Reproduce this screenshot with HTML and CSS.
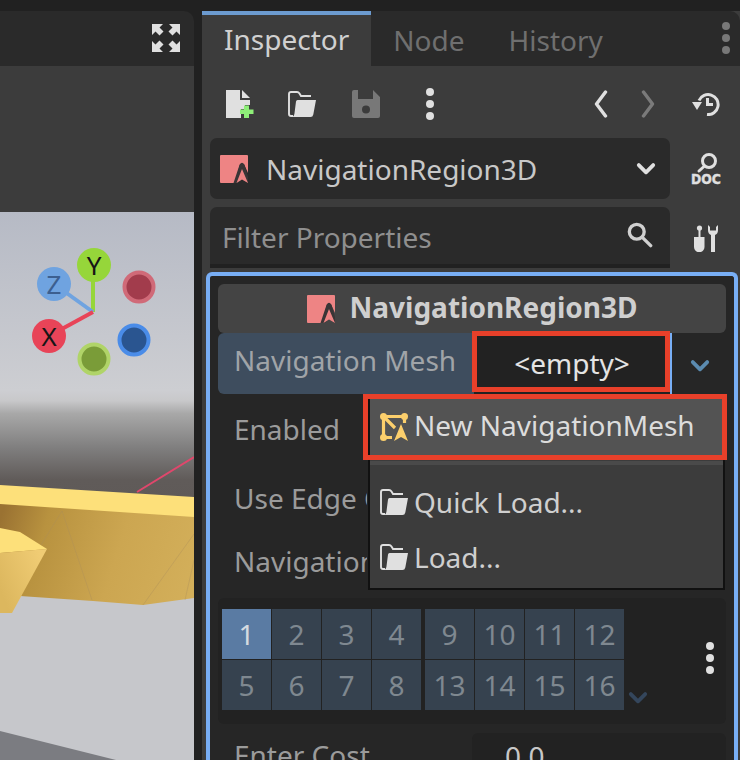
FILE: index.html
```html
<!DOCTYPE html>
<html lang="en">
<head>
<meta charset="utf-8">
<title>NavigationRegion3D Inspector</title>
<link rel="stylesheet" href="styles.css">
</head>
<body>
<svg class="defs" width="0" height="0" aria-hidden="true">
  <defs>
    <symbol id="i-node" viewBox="0 0 28 28">
      <path d="M1 0H27Q28 0 28 1V18L24 9H20L15 28H1Q0 28 0 27V1Q0 0 1 0Z" fill="#ee8484"/>
      <path d="M13.500 28 19.500 10Q22 5.500 24.500 10L28 22V28L22 24.500 17.500 28Z" fill="#3a3536"/>
      <path d="M16.500 28 22 14 28 28 22 24.500Z" fill="#ee8484"/>
    </symbol>
    <symbol id="i-folder" viewBox="0 0 28 26">
      <path d="M5 25H3Q1 25 1 23V3Q1 1 3 1H9Q10.500 1 11.500 2.500L13 5H23" fill="none" stroke="currentColor" stroke-width="1.900"/>
      <path d="M9.500 9H28L25.300 23.500Q24.800 26 22.500 26H4.500Q6 25 6.400 23L8 10.500Q8.200 9 9.500 9Z" fill="currentColor"/>
    </symbol>
    <symbol id="i-navmesh" viewBox="0 0 28 28">
      <path d="M3.500 3.500H24.500V10M3.500 3.500V24.500H12M3.500 3.500 15 15" fill="none" stroke="#fccf6c" stroke-width="3.200"/>
      <circle cx="3.500" cy="3.500" r="3.500" fill="#fccf6c"/><circle cx="24.500" cy="3.500" r="3.500" fill="#fccf6c"/><circle cx="3.500" cy="24.500" r="3.500" fill="#fccf6c"/>
      <path d="M14 28 21 11 28 28 21 24Z" fill="#fccf6c"/>
    </symbol>
    <symbol id="i-kebab" viewBox="0 0 10 32">
      <circle cx="5" cy="4" r="4" fill="currentColor"/><circle cx="5" cy="16" r="4" fill="currentColor"/><circle cx="5" cy="28" r="4" fill="currentColor"/>
    </symbol>
    <symbol id="i-chev" viewBox="0 0 18 12">
      <path d="M2.500 2.500 9 9 15.500 2.500" fill="none" stroke="currentColor" stroke-width="3.400" stroke-linecap="round" stroke-linejoin="round"/>
    </symbol>
  </defs>
</svg>

<main class="app">
  <section class="viewport-col">
    <header class="view-tabs">
      <svg class="fullscreen" viewBox="0 0 28 28" aria-hidden="true">
        <path d="M0 0H11L7.500 3.500 11.500 7.500 7.500 11.500 3.500 7.500 0 11ZM28 0V11L24.500 7.500 20.500 11.500 16.500 7.500 20.500 3.500 17 0ZM0 28V17L3.500 20.500 7.500 16.500 11.500 20.500 7.500 24.500 11 28ZM28 28H17L20.500 24.500 16.500 20.500 20.500 16.500 24.500 20.500 28 17Z" fill="#e0e0e0"/>
      </svg>
    </header>
    <div class="view-toolbar"></div>
    <svg class="scene" viewBox="0 212 194 548" aria-hidden="true">
      <defs>
        <linearGradient id="sky" x1="0" y1="212" x2="0" y2="500" gradientUnits="userSpaceOnUse">
          <stop offset="0" stop-color="#b6bac5"/><stop offset=".62" stop-color="#cdced2"/><stop offset=".655" stop-color="#c8c8ca"/><stop offset=".7" stop-color="#a8a8a8"/><stop offset=".82" stop-color="#7f7e7e"/><stop offset=".93" stop-color="#605b59"/><stop offset="1" stop-color="#5f5a58"/>
        </linearGradient>
        <linearGradient id="wall" x1="0" y1="520" x2="194" y2="580" gradientUnits="userSpaceOnUse">
          <stop offset="0" stop-color="#9a7232"/><stop offset=".22" stop-color="#b8923f"/><stop offset=".6" stop-color="#cca651"/><stop offset="1" stop-color="#d3af5a"/>
        </linearGradient>
        <linearGradient id="wedge" x1="0" y1="590" x2="47" y2="570" gradientUnits="userSpaceOnUse">
          <stop offset="0" stop-color="#dcb75e"/><stop offset="1" stop-color="#f0cc74"/>
        </linearGradient>
      </defs>
      <rect x="0" y="212" width="194" height="548" fill="url(#sky)"/>
      <rect x="0" y="500" width="194" height="260" fill="#c6c7cb"/>
      <path d="M0 731 116 760H0Z" fill="#7b7c81"/>
      <path d="M137 492 194 457" stroke="#e0476c" stroke-width="2"/>
      <path d="M0 500H194V598L143 605 93 601 20 596H0Z" fill="url(#wall)"/>
      <path d="M62 511 41 545M62 511 92 600M143 605 194 534M185 600 194 560" stroke="#a88d5c" stroke-width="1" fill="none" opacity=".35"/>
      <path d="M0 485 194 497V517L0 504Z" fill="#fde07a"/>
      <path d="M0 528 20 532 47 549 0 553Z" fill="#fde07a"/>
      <path d="M0 553 47 549 12 613H0Z" fill="url(#wedge)"/>
      <path d="M93 312V265" stroke="#96d63a" stroke-width="4"/>
      <path d="M93 312 54 284" stroke="#6fa3e0" stroke-width="4"/>
      <path d="M93 312 49 336" stroke="#e84458" stroke-width="4"/>
      <circle cx="94" cy="265" r="17" fill="#96d63a"/>
      <circle cx="54" cy="284" r="17" fill="#6fa3e0"/>
      <circle cx="49" cy="336" r="17" fill="#e84458"/>
      <circle cx="139" cy="287" r="14.500" fill="#a23c4c" stroke="#d06a78" stroke-width="4"/>
      <circle cx="134" cy="340" r="14.500" fill="#2a5590" stroke="#4a8ce8" stroke-width="4"/>
      <circle cx="94" cy="359" r="14.500" fill="#7a9c38" stroke="#b0d468" stroke-width="4"/>
      <text class="axis" x="94" y="274.500">Y</text>
      <text class="axis axis-z" x="54" y="293.500">Z</text>
      <text class="axis" x="49" y="345.500">X</text>
    </svg>
  </section>

  <section class="dock">
    <nav class="dock-tabs">
      <span class="dock-tab dock-tab-active">Inspector</span>
      <span class="dock-tab">Node</span>
      <span class="dock-tab">History</span>
      <svg class="dock-menu"><use href="#i-kebab"/></svg>
    </nav>

    <div class="tools">
      <div class="tools-left">
        <svg class="tool tool-new" viewBox="0 0 28 28" aria-hidden="true">
          <path d="M0 0H14V10H24V15H19V19H15V28H0Z" fill="#e0e0e0"/>
          <path d="M16 0 24 8H16Z" fill="#e0e0e0"/>
          <path d="M17.500 16.500H22.500V20.500H27V25H22.500V29H17.500V25H13.500V20.500H17.500Z" fill="#8eef78" transform="translate(.5 -1)"/>
        </svg>
        <svg class="tool tool-folder"><use href="#i-folder"/></svg>
        <svg class="tool" viewBox="0 0 28 28" aria-hidden="true">
          <path fill-rule="evenodd" d="M2 0H6V9H21V0L28 7V26Q28 28 26 28H2Q0 28 0 26V2Q0 0 2 0ZM14 15.500A4 4 0 1 0 14 23.500 4 4 0 1 0 14 15.500Z" fill="#787878"/>
        </svg>
        <svg class="tool-kebab"><use href="#i-kebab"/></svg>
      </div>
      <div class="tools-right">
        <svg class="arrow" viewBox="0 0 14 28" aria-hidden="true"><path d="M11.500 2 2.500 14 11.500 26" fill="none" stroke="#e0e0e0" stroke-width="3.400" stroke-linecap="round" stroke-linejoin="round"/></svg>
        <svg class="arrow arrow-off" viewBox="0 0 14 28" aria-hidden="true"><path d="M2.500 2 11.500 14 2.500 26" fill="none" stroke="#7a7a7a" stroke-width="3.400" stroke-linecap="round" stroke-linejoin="round"/></svg>
        <svg class="side-icon" viewBox="0 0 28 24" aria-hidden="true">
          <path d="M7 8.500A10 10 0 1 1 15 22.500" fill="none" stroke="#e0e0e0" stroke-width="3"/>
          <path d="M0 10 10 10 5 18Z" fill="#e0e0e0"/>
          <path d="M15.500 6V12.500H21" fill="none" stroke="#e0e0e0" stroke-width="3"/>
        </svg>
      </div>
    </div>

    <div class="picker-row">
      <div class="picker">
        <svg class="node-icon"><use href="#i-node"/></svg>
        <span class="picker-name">NavigationRegion3D</span>
        <svg class="picker-chev"><use href="#i-chev"/></svg>
      </div>
      <svg class="doc-icon" viewBox="0 0 30 32" aria-hidden="true">
        <circle cx="18" cy="8" r="6.500" fill="none" stroke="#e0e0e0" stroke-width="3"/>
        <path d="M13.500 13 8 18" stroke="#e0e0e0" stroke-width="3" stroke-linecap="round"/>
        <text class="doc-text" x="15" y="31" textLength="30" lengthAdjust="spacingAndGlyphs">DOC</text>
      </svg>
    </div>

    <div class="picker-row filter-row">
      <div class="filter">
        <span class="filter-text">Filter Properties</span>
        <svg class="search" viewBox="0 0 28 28" aria-hidden="true">
          <circle cx="10.500" cy="10.500" r="8" fill="none" stroke="#d0d0d0" stroke-width="3.600"/>
          <path d="M16.500 16.500 25.500 25.500" stroke="#d0d0d0" stroke-width="3.600" stroke-linecap="round"/>
        </svg>
      </div>
      <svg class="wrench" viewBox="0 0 24 28" aria-hidden="true">
        <path d="M5.500 13V5" stroke="#e0e0e0" stroke-width="2"/>
        <circle cx="5.500" cy="4" r="2.600" fill="#e0e0e0"/>
        <path d="M0 13H10.500V23A5 5 0 0 1 0 23Z" fill="#e0e0e0"/>
        <path d="M14 1V6Q14 10 17 11V28H21V11Q24 10 24 6V1L22 3V6.500H16V3Z" fill="#e0e0e0"/>
      </svg>
    </div>

    <div class="props">
      <div class="section">
        <svg class="node-icon"><use href="#i-node"/></svg>
        <span class="section-name">NavigationRegion3D</span>
      </div>
      <div class="row-mesh">
        <div class="mesh-main">
          <span class="label">Navigation Mesh</span>
          <span class="empty">&lt;empty&gt;</span>
        </div>
        <svg class="mesh-chev"><use href="#i-chev"/></svg>
      </div>
      <div class="row row-enabled"><span class="label">Enabled</span></div>
      <div class="row row-edge"><span class="label label-clip">Use Edge Connections</span></div>
      <div class="row row-nav"><span class="label label-clip">Navigation Layers</span></div>

      <div class="layers">
        <div class="layer-grid">
          <span class="cell cell-on">1</span><span class="cell">2</span><span class="cell">3</span><span class="cell">4</span>
          <span class="cell">5</span><span class="cell">6</span><span class="cell">7</span><span class="cell">8</span>
        </div>
        <div class="layer-grid">
          <span class="cell">9</span><span class="cell">10</span><span class="cell">11</span><span class="cell">12</span>
          <span class="cell">13</span><span class="cell">14</span><span class="cell">15</span><span class="cell">16</span>
        </div>
        <svg class="layer-chev"><use href="#i-chev"/></svg>
        <svg class="layer-kebab"><use href="#i-kebab"/></svg>
      </div>

      <div class="row-cost">
        <span class="label">Enter Cost</span>
        <span class="cost-value">0.0</span>
      </div>

      <div class="popup">
        <div class="popup-item popup-hot">
          <svg class="popup-icon"><use href="#i-navmesh"/></svg>
          <span class="popup-hot-text">New NavigationMesh</span>
        </div>
        <div class="popup-sep"></div>
        <div class="popup-item popup-quick">
          <svg class="popup-icon popup-folder"><use href="#i-folder"/></svg>
          <span>Quick Load...</span>
        </div>
        <div class="popup-item popup-load">
          <svg class="popup-icon popup-folder"><use href="#i-folder"/></svg>
          <span>Load...</span>
        </div>
      </div>
      <div class="mark mark-empty"></div>
      <div class="mark mark-new"></div>
    </div>
  </section>
</main>
</body>
</html>
```

FILE: styles.css
```css
* { box-sizing: border-box; }
html, body { margin: 0; height: 100%; }
body {
  width: 740px;
  height: 760px;
  overflow: hidden;
  background: #212121;
  font-family: "Noto Sans", sans-serif;
  font-size: 28px;
  line-height: 1;
}
.defs { position: absolute; }
.app {
  display: flex;
  gap: 8px;
  height: 760px;
  padding-top: 11px;
}

/* viewport */
.viewport-col {
  width: 194px;
  flex: none;
  display: flex;
  flex-direction: column;
}
.view-tabs {
  height: 55px;
  flex: none;
  background: #2a2a2a;
  border-top-right-radius: 10px;
  display: flex;
  justify-content: flex-end;
  align-items: center;
  padding: 0 14px 2px 0;
}
.fullscreen { width: 28px; height: 28px; display: block; }
.view-toolbar { height: 146px; flex: none; background: #3c3c3c; }
.scene { width: 194px; height: 548px; flex: none; display: block; }
.axis {
  font-family: "Noto Sans", sans-serif;
  font-size: 26px;
  text-anchor: middle;
  fill: #161616;
}
.axis-z { fill: #3c5f90; }

/* dock */
.dock {
  width: 538px;
  flex: none;
  background: #3c3c3c;
  display: flex;
  flex-direction: column;
}
.dock-tabs {
  height: 55px;
  flex: none;
  background: #2a2a2a;
  border-top-right-radius: 10px;
  display: flex;
  align-items: stretch;
}
.dock-tab {
  display: flex;
  align-items: center;
  padding: 2px 22px 0;
  color: #6f6f6f;
}
.dock-tab-active {
  background: #3c3c3c;
  border-top: 4px solid #6c9bd0;
  padding: 0 22px 4px;
  color: #d0d0d0;
}
.dock-menu {
  width: 10px;
  height: 32px;
  margin: 11px 9px 0 auto;
  color: #787878;
}
.tools {
  height: 72px;
  flex: none;
  display: flex;
  justify-content: space-between;
  align-items: center;
  padding: 4px 20px 0 24px;
}
.tools-left, .tools-right { display: flex; align-items: center; }
.tool { width: 28px; height: 28px; margin-right: 36px; display: block; }
.tool-new { margin-right: 34px; }
.tool-folder { color: #e0e0e0; }
.tool-kebab { width: 10px; height: 32px; color: #e0e0e0; margin-left: 9px; }
.arrow { width: 14px; height: 28px; display: block; }
.arrow-off { margin-left: 33px; }
.side-icon { width: 28px; height: 24px; margin-left: 37px; display: block; }

.picker-row {
  height: 61px;
  flex: none;
  display: flex;
  align-items: center;
  padding-left: 8px;
}
.filter-row { margin-top: 8px; }
.picker {
  width: 460px;
  height: 61px;
  background: #2a2a2a;
  border-radius: 7px;
  display: flex;
  align-items: center;
  padding: 0 14px 0 10px;
}
.node-icon { width: 28px; height: 28px; flex: none; display: block; }
.picker-name {
  margin-left: 18px;
  color: #c8c8c8;
  flex: 1;
}
.picker-chev { width: 20px; height: 14px; color: #e0e0e0; }
.doc-icon { width: 30px; height: 32px; margin-left: 21px; display: block; overflow: visible; }
.doc-text {
  font-family: "DejaVu Sans", sans-serif;
  font-weight: 700;
  font-size: 14.500px;
  text-anchor: middle;
  fill: #e0e0e0;
  stroke: #e0e0e0;
  stroke-width: .4px;
}
.filter {
  width: 460px;
  height: 61px;
  background: #2a2a2a;
  border-bottom: 4px solid #212121;
  border-radius: 7px 7px 0 0;
  display: flex;
  align-items: center;
  justify-content: space-between;
  padding: 2px 17px 0 12px;
}
.filter-text { color: #8f8f8f; }
.search { width: 26px; height: 26px; display: block; margin-bottom: 4px; }
.wrench { width: 24px; height: 28px; margin-left: 24px; display: block; }

/* property list */
.props {
  position: relative;
  margin: 4px 2px 0 4px;
  flex: 1;
  background: #262626;
  border: 4px solid #78aef5;
  border-bottom: 0;
  border-radius: 6px 6px 0 0;
  padding: 8px 8px 0;
  overflow: hidden;
}
.section {
  height: 49px;
  background: #444444;
  border-radius: 6px;
  display: flex;
  align-items: center;
  justify-content: center;
  gap: 15px;
}
.section-name { color: #cfcfcf; font-weight: 700; margin-bottom: 3px; }
.label { color: #9b9b9b; white-space: nowrap; }
.label-clip {
  width: 133px;
  overflow: hidden;
  line-height: 1.5;
}
.row-mesh { display: flex; height: 61px; align-items: center; }
.mesh-main {
  width: 454px;
  height: 61px;
  background: #3e4d5e;
  border-radius: 6px 0 0 6px;
  display: flex;
  align-items: stretch;
}
.mesh-main .label {
  width: 256px;
  padding: 13px 0 0 16px;
  color: #a0a4a8;
}
.empty {
  flex: 1;
  background: #222222;
  color: #e4e4e4;
  display: flex;
  align-items: center;
  justify-content: center;
  padding-bottom: 4px;
  border-top: 2px solid #78aef5;
  border-right: 2px solid #78aef5;
}
.mesh-chev { width: 20px; height: 14px; color: #5b8bb0; margin: 4px 0 0 18px; }
.row { display: flex; align-items: center; padding-left: 16px; }
.row-enabled { height: 70px; }
.row-edge { height: 68px; }
.row-nav { height: 58px; margin-bottom: 8px; }

.layers {
  height: 126px;
  background: #222222;
  border-radius: 6px;
  display: flex;
  align-items: flex-start;
  gap: 4px;
  padding: 11px 0 0 4px;
}
.layer-grid {
  display: grid;
  grid-template-columns: repeat(4, 49px);
  grid-auto-rows: 50px;
  gap: 1px;
}
.cell {
  background: #36424f;
  color: #7f8890;
  display: flex;
  align-items: center;
  justify-content: center;
}
.cell-on { background: #5a7ba3; color: #d4dae0; }
.layer-chev { width: 20px; height: 14px; color: #34465c; align-self: flex-end; margin: 0 0 19px 0; }
.layer-kebab { width: 10px; height: 32px; color: #e0e0e0; margin: 33px 0 0 53px; }

.row-cost {
  height: 50px;
  margin-top: 9px;
  display: flex;
  align-items: flex-start;
  padding-left: 16px;
}
.row-cost .label { width: 238px; padding-top: 8px; }
.cost-value {
  width: 254px;
  height: 50px;
  background: #222222;
  border-radius: 6px 6px 0 0;
  color: #c8c8c8;
  padding: 9px 0 0 33px;
}

/* popup */
.popup {
  position: absolute;
  left: 158px;
  top: 122px;
  width: 357px;
  height: 192px;
  background: #3c3c3c;
  border: 2px solid #111111;
  border-top: 0;
  color: #cfcfcf;
}
.popup-item {
  display: flex;
  align-items: center;
  gap: 6px;
  padding-left: 10px;
}
.popup-hot {
  height: 57px;
  background: #535353;
  color: #dcdcdc;
}
.popup-hot-text { margin-bottom: 3px; }
.popup-sep { height: 4px; margin-top: 6px; background: #4a4a4a; }
.popup-quick { height: 55px; margin-top: 9px; }
.popup-load { height: 55px; }
.popup-icon { width: 28px; height: 28px; flex: none; display: block; }
.popup-folder { color: #e0e0e0; }

/* red annotation boxes */
.mark {
  position: absolute;
  border: 5px solid #e8402a;
}
.mark-empty { left: 262px; top: 55px; width: 198px; height: 61px; }
.mark-new { left: 153px; top: 118px; width: 364px; height: 66px; }
```
